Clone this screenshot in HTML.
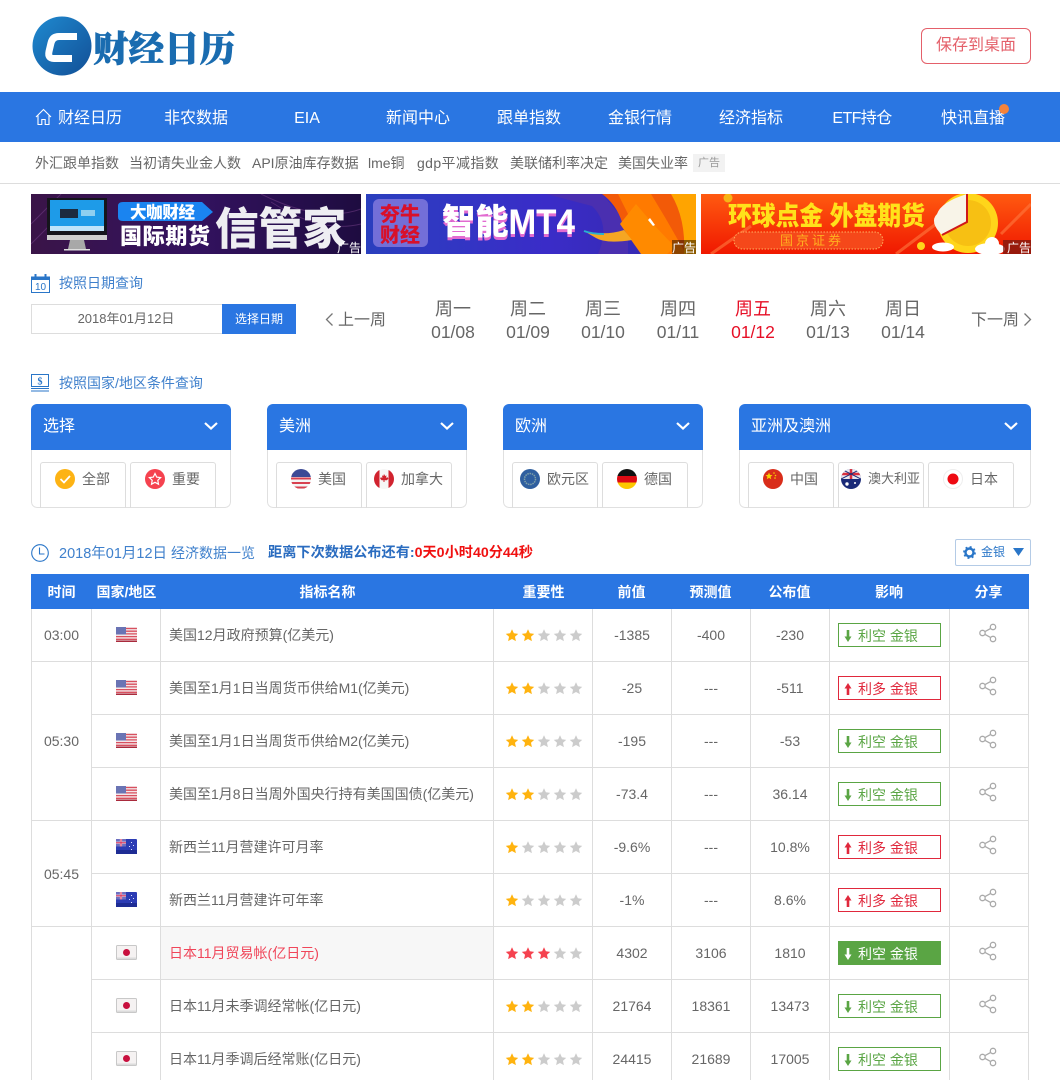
<!DOCTYPE html>
<html lang="zh-CN"><head><meta charset="utf-8"><title>财经日历</title>
<style>
*{box-sizing:border-box;margin:0;padding:0}
html,body{width:1060px;height:1080px;overflow:hidden;background:#fff}
body{position:relative;font-family:"Liberation Sans","Noto Sans CJK SC",sans-serif;color:#666;font-size:14px}
.a{position:absolute;white-space:nowrap}
.nav{position:absolute;left:0;top:92px;width:1060px;height:50px;background:#2a76e2}
.nav span{position:absolute;top:2px;line-height:50px;width:110px;text-align:center;color:#fff;font-size:16px}
.sub{position:absolute;top:153px;line-height:20px;font-size:14px;color:#666;white-space:nowrap}
.ban{position:absolute;top:194px;width:330px;height:60px;overflow:hidden;display:block}
.day{position:absolute;top:297px;width:60px;text-align:center;color:#666}
.day b{display:block;font-weight:normal;font-size:18px;line-height:24px}
.day i{display:block;font-style:normal;font-size:17.5px;line-height:22px}
.day.on{color:#e60f26}
.panel{position:absolute;top:404px;height:104px;border-radius:6px;overflow:hidden;background:#fff}
.ph{height:46px;background:#2a76e2;color:#fff;font-size:16px;line-height:46px;padding-left:12px;position:relative}
.ph svg{position:absolute;right:13px;top:18px}
.pb{position:absolute;left:0;right:0;top:46px;bottom:0;border:1px solid #e0e0e0;border-top:0;border-radius:0 0 6px 6px}
.it{position:absolute;top:58px;height:60px;width:86px;border:1px solid #ddd;border-radius:3px;display:flex;justify-content:center;align-items:flex-start;padding:6px 1px 0 0;color:#666;line-height:20px;gap:7px;white-space:nowrap}
table{position:absolute;left:31px;top:574px;border-collapse:separate;border-spacing:0;table-layout:fixed;width:998px}
th{height:35px;background:#2a76e2;color:#fff;font-size:14px;font-weight:bold;text-align:center}
th.p{padding-right:2px}
td{height:53px;border-right:1px solid #ddd;border-bottom:1px solid #ddd;text-align:center;color:#666;font-size:14px;padding:0}
td.t{border-left:1px solid #ddd}
td.n{text-align:left;padding-left:8px;font-size:14px}
td.hot{background:#f7f7f7;color:#f0465a}
.fl{display:block;margin:-2px auto 0;width:21px;height:15px}
.st{display:block;width:80px;height:13px;margin-left:10.500px}
.bd{display:block;width:103px;height:24px;margin-left:8px;border:1px solid #5aa544;color:#5aa544;line-height:24px;text-align:left;padding-left:5px;font-size:14px;white-space:nowrap}
.bd svg{display:inline-block;vertical-align:-1px;margin-right:6px}
.bd.r{border-color:#e0283c;color:#e0283c}
.bd.f{background:#5aa544;color:#fff}
.sh{display:block;margin:-5px 0 0 28px;width:20px;height:20px}
</style></head><body>
<svg width="0" height="0" style="position:absolute">
<defs>
<clipPath id="cc"><circle cx="10" cy="10" r="10"/></clipPath>
<symbol id="star" viewBox="0 0 14 14"><path d="M7 .3l2 4.300 4.700.6-3.500 3.200 1 4.700L7 10.800l-4.200 2.300 1-4.700L.3 5.200 5 4.600z"/></symbol>
<symbol id="share" viewBox="0 0 20 20"><g fill="none" stroke="#aaa" stroke-width="1.300"><circle cx="15" cy="4" r="2.700"/><circle cx="4.500" cy="10" r="2.700"/><circle cx="15" cy="16" r="2.700"/><path d="M12.700 5.400l-5.900 3.300M6.800 11.300l5.900 3.300"/></g></symbol>
<symbol id="fus" viewBox="0 0 21 15"><rect width="21" height="15" rx="1" fill="#f4e6e8"/><path d="M0 1.500h21M0 4.200h21M0 6.900h21M0 9.600h21M0 12.300h21" stroke="#d8505f" stroke-width="1.300"/><rect y="13.500" width="21" height="1.500" fill="#a92a3c"/><rect width="10" height="7.500" fill="#6a74b4"/></symbol>
<symbol id="fnz" viewBox="0 0 21 15"><rect width="21" height="15" rx="1" fill="#2c3cb4"/><rect y="11" width="21" height="4" fill="#1e2c94"/><rect width="10" height="7.500" fill="#6d6fc0"/><path d="M5 0v7.500M0 3.700h10" stroke="#f0d8e0" stroke-width="2.200"/><path d="M5 0v7.500M0 3.700h10" stroke="#d8305a" stroke-width="1"/><g fill="#dfe3ff"><rect x="15" y="3" width="1" height="1"/><rect x="17" y="6" width="1" height="1"/><rect x="13" y="7" width="1" height="1"/><rect x="15" y="10" width="1" height="1"/></g></symbol>
<symbol id="fjp" viewBox="0 0 21 15"><rect x=".5" y=".5" width="20" height="14" rx="1" fill="#f5f2f2" stroke="#c8c8c8"/><rect x="1" y="12.500" width="19" height="1.500" fill="#dcdcdc"/><circle cx="10.500" cy="7.500" r="3.500" fill="#c8103e"/></symbol>
<symbol id="down" viewBox="0 0 8 12"><path d="M2.700 0h2.600v6.500H7.500L4 12 .5 6.500h2.200z"/></symbol>
<symbol id="up" viewBox="0 0 8 12"><path d="M2.700 12h2.600V5.500H7.500L4 0 .5 5.500h2.200z"/></symbol>
<symbol id="chev" viewBox="0 0 14 8"><path d="M1 1l6 5.500L13 1" fill="none" stroke="#fff" stroke-width="2.200"/></symbol>
<linearGradient id="lg" x1="0" y1="0" x2="1" y2="1"><stop offset="0" stop-color="#1f8ad0"/><stop offset="1" stop-color="#124f96"/></linearGradient>
</defs></svg>

<!-- logo -->
<svg class="a" style="left:32px;top:16px" width="60" height="60" viewBox="0 0 60 60"><circle cx="30" cy="30" r="29.500" fill="url(#lg)"/><path d="M45 20.500H27Q20.500 20.500 19 27L17 35.500Q15.500 42.500 22 42.500H40" fill="none" stroke="#fff" stroke-width="7" stroke-linejoin="round"/></svg>
<div class="a" style="left:93px;top:24px;font:900 35.5px/46px 'Noto Serif CJK SC','Noto Sans CJK SC',serif;color:#1a6cb0;-webkit-text-stroke:.7px #1a6cb0">财经日历</div>

<div class="a" style="left:921px;top:28px;width:110px;height:36px;border:1px solid #e4606a;border-radius:6px;color:#e4606a;text-align:center;line-height:34px;font-size:16px">保存到桌面</div>

<!-- nav -->
<div class="nav">
<svg class="a" style="left:35px;top:16px" width="17" height="18" viewBox="0 0 17 18"><path d="M1 9l7.500-7.500L16 9M3 7.500V16.500h3.800v-5h3.400v5H14V7.500" fill="none" stroke="#fff" stroke-width="1.100"/></svg>
<span style="left:35px">财经日历</span>
<span style="left:141px">非农数据</span>
<span style="left:252px">EIA</span>
<span style="left:363px">新闻中心</span>
<span style="left:474px">跟单指数</span>
<span style="left:585px">金银行情</span>
<span style="left:696px">经济指标</span>
<span style="left:807px;letter-spacing:-.6px">ETF持仓</span>
<span style="left:918px">快讯直播</span>
<div class="a" style="left:999px;top:12px;width:10px;height:10px;border-radius:50%;background:#f5833b"></div>
</div>

<!-- sub -->
<div class="sub" style="left:35px">外汇跟单指数</div>
<div class="sub" style="left:129px">当初请失业金人数</div>
<div class="sub" style="left:252px">API原油库存数据</div>
<div class="sub" style="left:368px">lme铜</div>
<div class="sub" style="left:417px;letter-spacing:.4px">gdp平减指数</div>
<div class="sub" style="left:510px">美联储利率决定</div>
<div class="sub" style="left:618px">美国失业率</div>
<div class="a" style="left:693px;top:154px;width:32px;height:18px;background:#f2f2f2;color:#999;font-size:11px;line-height:18px;text-align:center">广告</div>
<div class="a" style="left:0;top:183px;width:1060px;height:1px;background:#ddd"></div>

<!-- banner 1 -->
<svg class="ban" style="left:31px" viewBox="0 0 330 60">
<defs><linearGradient id="b1" x1="0" x2="1"><stop offset="0" stop-color="#3a1448"/><stop offset=".5" stop-color="#33125f"/><stop offset="1" stop-color="#1e0c40"/></linearGradient></defs>
<rect width="330" height="60" fill="url(#b1)"/>
<path d="M0 30L30 0M0 50L45 5M230 0Q290 30 330 15M240 8Q290 40 330 30" stroke="#6a3a80" stroke-width="1" fill="none" opacity=".6"/>
<rect x="16" y="4" width="60" height="37" fill="#15151c"/><rect x="19" y="6" width="54" height="31" fill="#1e9be8"/><rect x="29" y="15" width="18" height="9" fill="#1c2b40"/><rect x="50" y="16" width="14" height="6" fill="#8fd0f0"/><rect x="19" y="32" width="54" height="5" fill="#bfe4fa"/>
<rect x="16" y="41" width="60" height="5" fill="#cfcfcf"/><path d="M39 46h14l2 9H37z" fill="#a8a8a8"/><rect x="33" y="55" width="26" height="1.500" fill="#ddd"/>
<path d="M87 12Q87 8 92 8H171l11 10-11 9H92Q87 27 87 23z" fill="#1a84f0"/>
<text x="99" y="24" font-size="16.500" font-weight="900" fill="#fff" font-family="Liberation Sans,Noto Sans CJK SC,sans-serif" textLength="65">大咖财经</text>
<text x="89" y="50" font-size="22" font-weight="900" fill="#fff" font-family="Liberation Sans,Noto Sans CJK SC,sans-serif" textLength="90">国际期货</text>
<text x="184" y="50" font-size="44" font-weight="900" fill="#eeeef2" font-family="Liberation Sans,Noto Sans CJK SC,sans-serif" textLength="131" lengthAdjust="spacingAndGlyphs">信管家</text>
<text x="306" y="58" font-size="12" fill="#fff" font-family="Liberation Sans,Noto Sans CJK SC,sans-serif">广告</text>
</svg>

<!-- banner 2 -->
<svg class="ban" style="left:366px" viewBox="0 0 330 60">
<defs><linearGradient id="b2" x1="0" x2="1"><stop offset="0" stop-color="#2a3fbe"/><stop offset=".55" stop-color="#3a2cc8"/><stop offset="1" stop-color="#3528a8"/></linearGradient></defs>
<rect width="330" height="60" fill="url(#b2)"/>
<path d="M180 0H236L262 30 262 60H232Q245 30 226 12z" fill="#4a2fb0"/>
<rect x="7" y="5" width="55" height="48" rx="6" fill="#736fd8"/>
<text x="14" y="27" font-size="20" font-weight="900" fill="#d8102a" font-family="Liberation Sans,Noto Sans CJK SC,sans-serif">夯牛</text>
<text x="14" y="48" font-size="20" font-weight="900" fill="#d8102a" font-family="Liberation Sans,Noto Sans CJK SC,sans-serif">财经</text>
<text x="76" y="43" font-size="35" font-weight="900" fill="#e26bd0" font-family="Liberation Sans,Noto Sans CJK SC,sans-serif" textLength="133" lengthAdjust="spacingAndGlyphs">智能MT4</text>
<text x="76" y="40" font-size="35" font-weight="900" fill="#fff" font-family="Liberation Sans,Noto Sans CJK SC,sans-serif" textLength="133" lengthAdjust="spacingAndGlyphs">智能MT4</text>
<path d="M236 0H330V60H276L256 28Q250 10 236 0z" fill="#f25a08"/>
<path d="M252 0H285L300 25 320 60H296L262 20z" fill="#ff7a00"/>
<path d="M305 0H330V60H318Q320 25 305 0z" fill="#ffa400"/>
<path d="M270 10L287 30 309 53 301 60H275L254 30z" fill="#ff8a00"/>
<path d="M218 37Q240 42 258 36L266 46Q240 50 230 44z" fill="#f5a623"/>
<path d="M218 37Q226 40 238 40" stroke="#28b0d0" stroke-width="2" fill="none"/>
<path d="M284 24l5 7-2 1-5-6z" fill="#fff"/>
<rect x="306" y="46" width="24" height="14" fill="#000" opacity=".45"/>
<text x="306" y="58" font-size="12" fill="#fff" font-family="Liberation Sans,Noto Sans CJK SC,sans-serif">广告</text>
</svg>

<!-- banner 3 -->
<svg class="ban" style="left:701px" viewBox="0 0 330 60">
<defs><linearGradient id="b3" x1="0" y1="0" x2="0" y2="1"><stop offset="0" stop-color="#ff5a10"/><stop offset="1" stop-color="#f01800"/></linearGradient></defs>
<rect width="330" height="60" fill="url(#b3)"/>
<path d="M10 60L50 32M195 60L235 30M300 40L330 10" stroke="#ff7a40" stroke-width="3" opacity=".6"/>
<circle cx="27" cy="4" r="4.500" fill="#f6b416"/>
<text x="27" y="31" font-size="26" font-weight="900" fill="#ffe21a" font-family="Liberation Sans,Noto Sans CJK SC,sans-serif" textLength="197" lengthAdjust="spacingAndGlyphs">环球点金 外盘期货</text>
<rect x="33" y="38" width="149" height="17" rx="8.500" fill="#f5481a" stroke="#ffb060" stroke-dasharray="1.500 1.500"/>
<text x="79" y="51" font-size="13" fill="#ffb020" font-family="Liberation Sans,Noto Sans CJK SC,sans-serif" letter-spacing="3">国京证券</text>
<circle cx="267" cy="29" r="30" fill="#ffd51a"/><circle cx="267" cy="29" r="23" fill="#f7c013"/>
<path d="M266 0V28L241 41Q228 28 236 20Q240 8 266 0z" fill="#f8f4e8"/>
<path d="M266 0V28L241 41" fill="none" stroke="#d01818" stroke-width="2"/>
<circle cx="220" cy="52" r="4" fill="#ffd51a"/>
<ellipse cx="242" cy="53" rx="11" ry="4.500" fill="#fff"/>
<ellipse cx="289" cy="55" rx="15" ry="6" fill="#fff"/><circle cx="291" cy="50" r="7" fill="#fff"/>
<rect x="302" y="46" width="28" height="14" fill="#7a1a10" opacity=".75"/>
<text x="306" y="58" font-size="12" fill="#fff" font-family="Liberation Sans,Noto Sans CJK SC,sans-serif">广告</text>
</svg>

<!-- date query -->
<svg class="a" style="left:31px;top:274px" width="19" height="19" viewBox="0 0 19 19"><rect x=".5" y="3" width="18" height="15.500" fill="none" stroke="#2a76c8"/><rect x="0" y="2.500" width="19" height="3.500" fill="#2a76c8"/><rect x="3.500" y="0" width="2" height="3" fill="#2a76c8"/><rect x="13.500" y="0" width="2" height="3" fill="#2a76c8"/><text x="9.500" y="16" font-size="10" fill="#2a76c8" text-anchor="middle" font-family="Liberation Sans">10</text></svg>
<div class="a" style="left:59px;top:274px;line-height:18px;font-size:14px;color:#3f80cc">按照日期查询</div>
<div class="a" style="left:31px;top:304px;width:192px;height:30px;border:1px solid #ddd;text-align:center;line-height:28px;font-size:13px;color:#666;padding-right:2px">2018年01月12日</div>
<div class="a" style="left:222px;top:304px;width:74px;height:30px;background:#2a76e2;color:#fff;text-align:center;line-height:30px;font-size:12px">选择日期</div>
<svg class="a" style="left:325px;top:312px" width="9" height="15" viewBox="0 0 9 15"><path d="M7.500 1.500L1.500 7.500 7.500 13.500" fill="none" stroke="#777" stroke-width="1.300"/></svg>
<div class="a" style="left:338px;top:309px;font-size:16px;line-height:24px;color:#666">上一周</div>
<div class="day" style="left:423px"><b>周一</b><i>01/08</i></div>
<div class="day" style="left:498px"><b>周二</b><i>01/09</i></div>
<div class="day" style="left:573px"><b>周三</b><i>01/10</i></div>
<div class="day" style="left:648px"><b>周四</b><i>01/11</i></div>
<div class="day on" style="left:723px"><b>周五</b><i>01/12</i></div>
<div class="day" style="left:798px"><b>周六</b><i>01/13</i></div>
<div class="day" style="left:873px"><b>周日</b><i>01/14</i></div>
<div class="a" style="left:971px;top:309px;font-size:16px;line-height:24px;color:#666">下一周</div>
<svg class="a" style="left:1023px;top:312px" width="9" height="15" viewBox="0 0 9 15"><path d="M1.500 1.500L7.500 7.500 1.500 13.500" fill="none" stroke="#777" stroke-width="1.300"/></svg>

<!-- region -->
<svg class="a" style="left:31px;top:374px" width="18" height="18" viewBox="0 0 18 18"><rect x=".5" y=".5" width="17" height="12" fill="none" stroke="#2a76c8"/><text x="9" y="10.500" font-size="10" font-weight="bold" fill="#2a76c8" text-anchor="middle" font-family="Liberation Serif">$</text><path d="M0 14.500h18M0 17h18" stroke="#2a76c8"/></svg>
<div class="a" style="left:59px;top:374px;line-height:18px;font-size:14px;color:#3f80cc">按照国家/地区条件查询</div>

<div class="panel" style="left:31px;width:200px"><div class="ph">选择<svg width="14" height="8"><use href="#chev"/></svg></div><div class="pb"></div></div>
<div class="panel" style="left:267px;width:200px"><div class="ph">美洲<svg width="14" height="8"><use href="#chev"/></svg></div><div class="pb"></div></div>
<div class="panel" style="left:503px;width:200px"><div class="ph">欧洲<svg width="14" height="8"><use href="#chev"/></svg></div><div class="pb"></div></div>
<div class="panel" style="left:739px;width:292px"><div class="ph">亚洲及澳洲<svg width="14" height="8"><use href="#chev"/></svg></div><div class="pb"></div></div>

<div style="position:absolute;left:0;top:404px;width:1060px;height:104px;overflow:hidden">
<div class="it" style="left:40px"><svg width="20" height="20"><circle cx="10" cy="10" r="10" fill="#fdb314"/><path d="M5.500 10l3.500 3.500 6-6.500" fill="none" stroke="#fff" stroke-width="1.800"/></svg>全部</div>
<div class="it" style="left:130px"><svg width="20" height="20"><circle cx="10" cy="10" r="10" fill="#f5424f"/><path d="M10 4.500l1.700 3.600 3.900.5-2.800 2.700.7 3.900-3.500-1.900-3.500 1.900.7-3.900-2.800-2.700 3.900-.5z" fill="none" stroke="#fff" stroke-width="1.200"/></svg>重要</div>
<div class="it" style="left:276px"><svg width="20" height="20"><g clip-path="url(#cc)"><rect width="20" height="20" fill="#f4f4f4"/><path d="M0 5h20M0 9.500h20M0 14h20M0 18.500h20" stroke="#d8404f" stroke-width="2"/><rect width="20" height="8" fill="#3c4a96"/></g></svg>美国</div>
<div class="it" style="left:366px"><svg width="20" height="20"><g clip-path="url(#cc)"><rect width="20" height="20" fill="#f6f6f6"/><rect width="5.500" height="20" fill="#d1232f"/><rect x="14.500" width="5.500" height="20" fill="#d1232f"/><path d="M10 5l1.200 2 1.300-.6-.4 2.500 1.600-.7.700 1.400-1.500 1.600H10.500V13h-1v-1.800H7.600L6.100 9.600l.7-1.400 1.600.7L8 6.400l1.300.6z" fill="#d1232f"/></g></svg>加拿大</div>
<div class="it" style="left:512px"><svg width="20" height="20"><circle cx="10" cy="10" r="10" fill="#2f5f9f"/><circle cx="10" cy="10" r="5.500" fill="none" stroke="#7fa0a8" stroke-width="1.500" stroke-dasharray="1.500 .8"/></svg>欧元区</div>
<div class="it" style="left:602px"><svg width="20" height="20"><g clip-path="url(#cc)"><rect width="20" height="7" fill="#111"/><rect y="7" width="20" height="6.500" fill="#dd0b14"/><rect y="13.500" width="20" height="6.500" fill="#fdc800"/></g></svg>德国</div>
<div class="it" style="left:748px"><svg width="20" height="20"><circle cx="10" cy="10" r="10" fill="#d92d1a"/><path d="M6 3.500l1 2.400 2.500.2-1.900 1.600.6 2.500L6 8.900l-2.200 1.300.6-2.500-1.900-1.600L5 5.900z" fill="#f8d200"/><circle cx="11" cy="4" r=".8" fill="#f8d200"/><circle cx="12.500" cy="6.500" r=".8" fill="#f8d200"/><circle cx="12" cy="9" r=".8" fill="#f8d200"/></svg>中国</div>
<div class="it" style="left:838px;font-size:13px"><svg width="20" height="20"><g clip-path="url(#cc)"><rect width="20" height="20" fill="#1a2a78"/><rect y="0" width="20" height="10" fill="#e8e8f0"/><path d="M0 5h20M10 0v10" stroke="#d8303f" stroke-width="2.500"/><path d="M0 0l20 10M20 0L0 10" stroke="#1a2a78" stroke-width="1"/><circle cx="6" cy="15" r="1.700" fill="#fff"/><circle cx="14" cy="14" r="1" fill="#fff"/></g></svg>澳大利亚</div>
<div class="it" style="left:928px"><svg width="20" height="20"><circle cx="10" cy="10" r="9.500" fill="#fff" stroke="#eee"/><circle cx="10" cy="10" r="5.500" fill="#ee0a12"/></svg>日本</div>
</div>

<!-- data header -->
<svg class="a" style="left:31px;top:544px" width="18" height="18" viewBox="0 0 18 18"><circle cx="9" cy="9" r="8.300" fill="none" stroke="#2a76c8" stroke-width="1.100"/><path d="M8.500 3.500V10h5" fill="none" stroke="#2a76c8" stroke-width="1.100"/></svg>
<div class="a" style="left:59px;top:544px;line-height:18px;font-size:14.500px;color:#3f80cc">2018年01月12日 <span style="font-size:14px">经济数据一览</span></div>
<div class="a" style="left:268px;top:544px;line-height:18px;font-size:14.200px;font-weight:bold;color:#2a6cc0">距离下次数据公布还有:<span style="color:#f01010">0天0小时40分44秒</span></div>
<div class="a" style="left:955px;top:539px;width:76px;height:27px;border:1px solid #b4cbe6;border-radius:2px;font-size:12px;line-height:25px;color:#2a76c8;padding-left:25px">金银
<svg class="a" style="left:7px;top:6px" width="13" height="13" viewBox="0 0 13 13"><circle cx="6.500" cy="6.500" r="4" fill="none" stroke="#2a76c8" stroke-width="2.400"/><circle cx="6.500" cy="6.500" r="5.600" fill="none" stroke="#2a76c8" stroke-width="1.600" stroke-dasharray="2 2.400"/></svg>
<svg class="a" style="left:57px;top:8px" width="11" height="8" viewBox="0 0 11 8"><path d="M0 0h11L5.500 8z" fill="#2a76c8"/></svg>
</div>

<table>
<colgroup><col style="width:61px"><col style="width:69px"><col style="width:333px"><col style="width:99px"><col style="width:79px"><col style="width:79px"><col style="width:79px"><col style="width:120px"><col style="width:79px"></colgroup>
<tr><th>时间</th><th>国家/地区</th><th>指标名称</th><th>重要性</th><th class="p">前值</th><th class="p">预测值</th><th class="p">公布值</th><th class="p">影响</th><th class="p">分享</th></tr>

<tr><td class="t">03:00</td><td><svg class="fl"><use href="#fus"/></svg></td><td class="n">美国12月政府预算(亿美元)</td>
<td><svg class="st" viewBox="0 0 80 13"><use href="#star" x="0" width="14" height="13" fill="#ffb30f"/><use href="#star" x="16" width="14" height="13" fill="#ffb30f"/><use href="#star" x="32" width="14" height="13" fill="#ccc"/><use href="#star" x="48" width="14" height="13" fill="#ccc"/><use href="#star" x="64" width="14" height="13" fill="#ccc"/></svg></td>
<td>-1385</td><td>-400</td><td>-230</td><td><span class="bd"><svg width="8" height="12" fill="#5aa544"><use href="#down"/></svg>利空 金银</span></td><td><svg class="sh"><use href="#share"/></svg></td></tr>

<tr><td class="t" rowspan="3">05:30</td><td><svg class="fl"><use href="#fus"/></svg></td><td class="n">美国至1月1日当周货币供给M1(亿美元)</td>
<td><svg class="st" viewBox="0 0 80 13"><use href="#star" x="0" width="14" height="13" fill="#ffb30f"/><use href="#star" x="16" width="14" height="13" fill="#ffb30f"/><use href="#star" x="32" width="14" height="13" fill="#ccc"/><use href="#star" x="48" width="14" height="13" fill="#ccc"/><use href="#star" x="64" width="14" height="13" fill="#ccc"/></svg></td>
<td>-25</td><td>---</td><td>-511</td><td><span class="bd r"><svg width="8" height="12" fill="#e0283c"><use href="#up"/></svg>利多 金银</span></td><td><svg class="sh"><use href="#share"/></svg></td></tr>

<tr><td><svg class="fl"><use href="#fus"/></svg></td><td class="n">美国至1月1日当周货币供给M2(亿美元)</td>
<td><svg class="st" viewBox="0 0 80 13"><use href="#star" x="0" width="14" height="13" fill="#ffb30f"/><use href="#star" x="16" width="14" height="13" fill="#ffb30f"/><use href="#star" x="32" width="14" height="13" fill="#ccc"/><use href="#star" x="48" width="14" height="13" fill="#ccc"/><use href="#star" x="64" width="14" height="13" fill="#ccc"/></svg></td>
<td>-195</td><td>---</td><td>-53</td><td><span class="bd"><svg width="8" height="12" fill="#5aa544"><use href="#down"/></svg>利空 金银</span></td><td><svg class="sh"><use href="#share"/></svg></td></tr>

<tr><td><svg class="fl"><use href="#fus"/></svg></td><td class="n">美国至1月8日当周外国央行持有美国国债(亿美元)</td>
<td><svg class="st" viewBox="0 0 80 13"><use href="#star" x="0" width="14" height="13" fill="#ffb30f"/><use href="#star" x="16" width="14" height="13" fill="#ffb30f"/><use href="#star" x="32" width="14" height="13" fill="#ccc"/><use href="#star" x="48" width="14" height="13" fill="#ccc"/><use href="#star" x="64" width="14" height="13" fill="#ccc"/></svg></td>
<td>-73.4</td><td>---</td><td>36.14</td><td><span class="bd"><svg width="8" height="12" fill="#5aa544"><use href="#down"/></svg>利空 金银</span></td><td><svg class="sh"><use href="#share"/></svg></td></tr>

<tr><td class="t" rowspan="2">05:45</td><td><svg class="fl"><use href="#fnz"/></svg></td><td class="n">新西兰11月营建许可月率</td>
<td><svg class="st" viewBox="0 0 80 13"><use href="#star" x="0" width="14" height="13" fill="#ffb30f"/><use href="#star" x="16" width="14" height="13" fill="#ccc"/><use href="#star" x="32" width="14" height="13" fill="#ccc"/><use href="#star" x="48" width="14" height="13" fill="#ccc"/><use href="#star" x="64" width="14" height="13" fill="#ccc"/></svg></td>
<td>-9.6%</td><td>---</td><td>10.8%</td><td><span class="bd r"><svg width="8" height="12" fill="#e0283c"><use href="#up"/></svg>利多 金银</span></td><td><svg class="sh"><use href="#share"/></svg></td></tr>

<tr><td><svg class="fl"><use href="#fnz"/></svg></td><td class="n">新西兰11月营建许可年率</td>
<td><svg class="st" viewBox="0 0 80 13"><use href="#star" x="0" width="14" height="13" fill="#ffb30f"/><use href="#star" x="16" width="14" height="13" fill="#ccc"/><use href="#star" x="32" width="14" height="13" fill="#ccc"/><use href="#star" x="48" width="14" height="13" fill="#ccc"/><use href="#star" x="64" width="14" height="13" fill="#ccc"/></svg></td>
<td>-1%</td><td>---</td><td>8.6%</td><td><span class="bd r"><svg width="8" height="12" fill="#e0283c"><use href="#up"/></svg>利多 金银</span></td><td><svg class="sh"><use href="#share"/></svg></td></tr>

<tr><td class="t" rowspan="3"></td><td><svg class="fl"><use href="#fjp"/></svg></td><td class="n hot">日本11月贸易帐(亿日元)</td>
<td><svg class="st" viewBox="0 0 80 13"><use href="#star" x="0" width="14" height="13" fill="#f5424f"/><use href="#star" x="16" width="14" height="13" fill="#f5424f"/><use href="#star" x="32" width="14" height="13" fill="#f5424f"/><use href="#star" x="48" width="14" height="13" fill="#ccc"/><use href="#star" x="64" width="14" height="13" fill="#ccc"/></svg></td>
<td>4302</td><td>3106</td><td>1810</td><td><span class="bd f"><svg width="8" height="12" fill="#fff"><use href="#down"/></svg>利空 金银</span></td><td><svg class="sh"><use href="#share"/></svg></td></tr>

<tr><td><svg class="fl"><use href="#fjp"/></svg></td><td class="n">日本11月未季调经常帐(亿日元)</td>
<td><svg class="st" viewBox="0 0 80 13"><use href="#star" x="0" width="14" height="13" fill="#ffb30f"/><use href="#star" x="16" width="14" height="13" fill="#ffb30f"/><use href="#star" x="32" width="14" height="13" fill="#ccc"/><use href="#star" x="48" width="14" height="13" fill="#ccc"/><use href="#star" x="64" width="14" height="13" fill="#ccc"/></svg></td>
<td>21764</td><td>18361</td><td>13473</td><td><span class="bd"><svg width="8" height="12" fill="#5aa544"><use href="#down"/></svg>利空 金银</span></td><td><svg class="sh"><use href="#share"/></svg></td></tr>

<tr><td><svg class="fl"><use href="#fjp"/></svg></td><td class="n">日本11月季调后经常账(亿日元)</td>
<td><svg class="st" viewBox="0 0 80 13"><use href="#star" x="0" width="14" height="13" fill="#ffb30f"/><use href="#star" x="16" width="14" height="13" fill="#ffb30f"/><use href="#star" x="32" width="14" height="13" fill="#ccc"/><use href="#star" x="48" width="14" height="13" fill="#ccc"/><use href="#star" x="64" width="14" height="13" fill="#ccc"/></svg></td>
<td>24415</td><td>21689</td><td>17005</td><td><span class="bd"><svg width="8" height="12" fill="#5aa544"><use href="#down"/></svg>利空 金银</span></td><td><svg class="sh"><use href="#share"/></svg></td></tr>
</table>
</body></html>
